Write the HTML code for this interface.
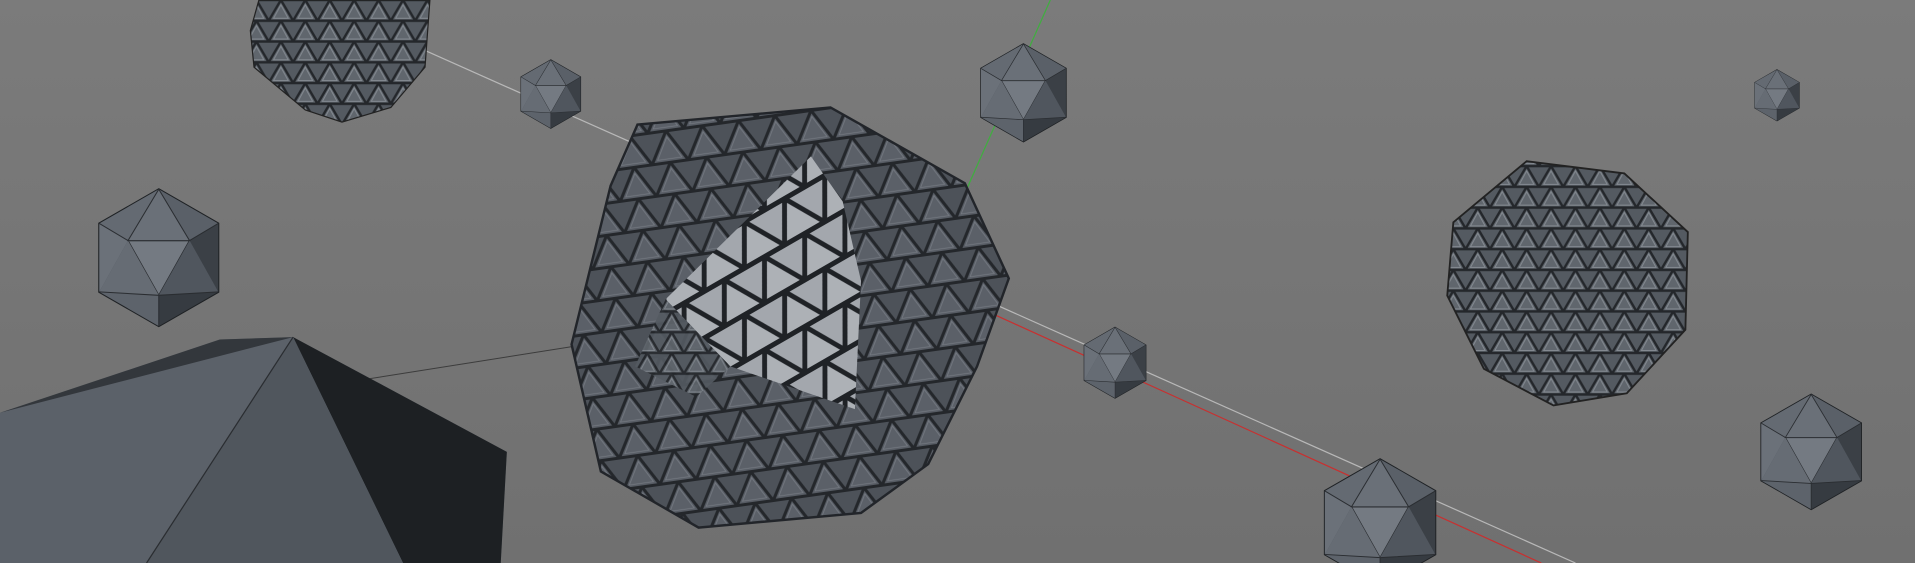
<!DOCTYPE html>
<html><head><meta charset="utf-8"><style>
html,body{margin:0;padding:0;width:1915px;height:563px;overflow:hidden;background:#767676}
svg{display:block}
</style></head><body>
<svg width="1915" height="563" viewBox="0 0 1568 461" preserveAspectRatio="none" xmlns="http://www.w3.org/2000/svg">
<defs>
<linearGradient id="bg" x1="0" y1="0" x2="0" y2="1"><stop offset="0" stop-color="#7b7b7b"/><stop offset="1" stop-color="#707070"/></linearGradient>
<pattern id="mesh" width="30" height="26" patternUnits="userSpaceOnUse" patternTransform="rotate(-8)">
<rect width="30" height="26" fill="#4d5259"/>
<path d="M0 26 L15 0 L30 26 Z" fill="#575c64" stroke="#24272b" stroke-width="2.5"/>
<path d="M5 23 L15 5 L25 23 Z" fill="#5b6068" stroke="#737880" stroke-width="0.8"/>
<path d="M0 0 H30" stroke="#24272b" stroke-width="2.5"/>
</pattern>
<pattern id="mesh2" width="38" height="33" patternUnits="userSpaceOnUse" patternTransform="rotate(-30)">
<rect width="38" height="33" fill="#a3a7ad"/>
<path d="M0 33 L19 0 L38 33 Z" fill="#adb1b6" stroke="#1f2226" stroke-width="4"/>
<path d="M0 0 H38" stroke="#1f2226" stroke-width="4"/>
</pattern>
<pattern id="mesh3" width="20" height="17" patternUnits="userSpaceOnUse">
<rect width="20" height="17" fill="#545a61"/>
<path d="M0 17 L10 0 L20 17 Z" fill="#60666d" stroke="#24272b" stroke-width="2"/>
<path d="M0 0 H20" stroke="#24272b" stroke-width="2"/>
<path d="M4 15 L10 4 L16 15Z" fill="none" stroke="#858b92" stroke-width=".8"/>
</pattern>
<symbol id="ico" viewBox="-1 -1 2 2" overflow="visible">
<polygon points="0,-1 0.87,-0.5 0.87,0.5 0,1 -0.87,0.5 -0.87,-0.5" fill="#4f555d" stroke="#1e2124" stroke-width="0.03"/>
<polygon points="0,-1 0.87,-0.5 0.45,-0.25" fill="#5a6068"/>
<polygon points="0,-1 -0.87,-0.5 -0.45,-0.25" fill="#646a72"/>
<polygon points="-0.87,-0.5 -0.87,0.5 -0.45,-0.25" fill="#6b7179"/>
<polygon points="0.87,-0.5 0.87,0.5 0.45,-0.25" fill="#3b4046"/>
<polygon points="-0.45,-0.25 0.45,-0.25 0,0.55" fill="#747a82" stroke="#2a2d31" stroke-width="0.02"/>
<polygon points="-0.87,0.5 0,1 0,0.55" fill="#5d636b"/>
<polygon points="0.87,0.5 0,1 0,0.55" fill="#363b41"/>
<polygon points="-0.87,0.5 -0.45,-0.25 0,0.55" fill="#666c74"/>
<polygon points="0.87,0.5 0.45,-0.25 0,0.55" fill="#50565e"/>
<polygon points="0,-1 -0.45,-0.25 0.45,-0.25" fill="#6a7078"/>
<g fill="none" stroke="#2a2d31" stroke-width="0.015"><path d="M0 -1 L-0.45 -0.25 L0.45 -0.25Z M-0.87 -0.5 L-0.45 -0.25 M0.87 -0.5 L0.45 -0.25 M0 1 L0 0.55 M-0.87 0.5 L0 0.55 L0.87 0.5"/></g>
</symbol>
</defs>
<rect width="1568" height="461" fill="url(#bg)"/>
<line x1="345" y1="40" x2="1290" y2="461" stroke="#b8b8b8" stroke-width="1"/>
<line x1="815" y1="258" x2="1262" y2="461" stroke="#c83030" stroke-width="1"/>
<line x1="860" y1="0" x2="784" y2="172" stroke="#3fae3f" stroke-width="1"/>
<line x1="0" y1="358" x2="480" y2="282" stroke="#3c3c3c" stroke-width="0.8"/>
<polygon points="212,0 352,0 348,55 320,88 280,100 250,90 208,55 205,25" fill="url(#mesh3)" stroke="#222" stroke-width="1"/>
<polygon points="0,338 180,278 240,276 415,370 410,461 0,461" fill="#5b6169"/>
<polygon points="240,276 415,370 410,461 330,461" fill="#1d2023"/>
<polygon points="180,278 240,276 0,338" fill="#33373c"/>
<polygon points="240,276 330,461 120,461" fill="#50565d"/>
<polyline points="240,276 120,461" stroke="#2a2d31" fill="none"/>
<polygon points="522,102 680,88 790,150 826,228 800,300 760,380 705,420 572,432 492,386 468,282 500,152" fill="url(#mesh)" stroke="#22252a" stroke-width="2"/>
<polygon points="664,128 545,245 598,300 700,335 705,230 690,165" fill="url(#mesh2)"/>
<polygon points="545,245 598,300 570,325 520,300" fill="url(#mesh3)" opacity="0.9"/>
<polygon points="1190,182 1250,132 1330,142 1382,190 1380,270 1332,322 1272,332 1215,302 1185,242" fill="url(#mesh3)" stroke="#222" stroke-width="1.5"/>
<use href="#ico" x="423" y="49" width="56" height="56"/>
<use href="#ico" x="798" y="34" width="80" height="84"/>
<use href="#ico" x="72" y="155" width="116" height="112"/>
<use href="#ico" x="884" y="268" width="58" height="58"/>
<use href="#ico" x="1432" y="57" width="46" height="42"/>
<use href="#ico" x="1436" y="322" width="94" height="96"/>
<use href="#ico" x="1078" y="376" width="104" height="104"/>
</svg>
</body></html>
